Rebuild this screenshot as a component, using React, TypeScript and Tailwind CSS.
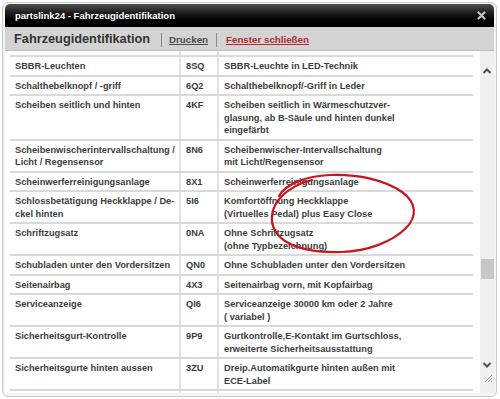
import React from "react";

type Row = { a: string[]; code: string; c: string[] };

const rows: Row[] = [
  { a: ["SBBR-Leuchten"], code: "8SQ", c: ["SBBR-Leuchte in LED-Technik"] },
  { a: ["Schalthebelknopf / -griff"], code: "6Q2", c: ["Schalthebelknopf/-Griff in Leder"] },
  {
    a: ["Scheiben seitlich und hinten"],
    code: "4KF",
    c: ["Scheiben seitlich in Wärmeschutzver-", "glasung, ab B-Säule und hinten dunkel", "eingefärbt"],
  },
  {
    a: ["Scheibenwischerintervallschaltung /", "Licht / Regensensor"],
    code: "8N6",
    c: ["Scheibenwischer-Intervallschaltung", "mit Licht/Regensensor"],
  },
  { a: ["Scheinwerferreinigungsanlage"], code: "8X1", c: ["Scheinwerferreinigungsanlage"] },
  {
    a: ["Schlossbetätigung Heckklappe / De-", "ckel hinten"],
    code: "5I6",
    c: ["Komfortöffnung Heckklappe", "(Virtuelles Pedal) plus Easy Close"],
  },
  { a: ["Schriftzugsatz"], code: "0NA", c: ["Ohne Schriftzugsatz", "(ohne Typbezeichnung)"] },
  { a: ["Schubladen unter den Vordersitzen"], code: "QN0", c: ["Ohne Schubladen unter den Vordersitzen"] },
  { a: ["Seitenairbag"], code: "4X3", c: ["Seitenairbag vorn, mit Kopfairbag"] },
  { a: ["Serviceanzeige"], code: "QI6", c: ["Serviceanzeige 30000 km oder 2 Jahre", "( variabel )"] },
  {
    a: ["Sicherheitsgurt-Kontrolle"],
    code: "9P9",
    c: ["Gurtkontrolle,E-Kontakt im Gurtschloss,", "erweiterte Sicherheitsausstattung"],
  },
  {
    a: ["Sicherheitsgurte hinten aussen"],
    code: "3ZU",
    c: ["Dreip.Automatikgurte hinten außen mit", "ECE-Label"],
  },
  { a: [""], code: "", c: [""] },
];

function Lines({ l }: { l: string[] }) {
  return (
    <>
      {l.map((t, i) => (
        <div key={i} className="whitespace-nowrap">
          {t || "\u00a0"}
        </div>
      ))}
    </>
  );
}

export default function App() {
  return (
    <div className="relative w-[500px] h-[399px] bg-white overflow-hidden font-['Liberation_Sans',Arial,sans-serif]">
      <div className="mt-[2px] ml-[2px] w-[495px] h-[395px] border border-[#c9c9c9] rounded-[6px] pl-[2px] pt-[1px] pr-[2px] pb-[3px] bg-[#f4f4f4]">
        <div className="flex flex-col h-full">
          {/* title bar */}
          <div className="h-[23px] flex items-center justify-between rounded-t-[5px] bg-linear-to-b from-[#505050] via-[#111] to-black pl-[10px] pr-[8px]">
            <span className="text-white font-bold text-[9.5px] leading-none">partslink24 - Fahrzeugidentifikation</span>
            <svg width="9" height="9" viewBox="0 0 9 9">
              <path d="M1.5 1.5 L7.5 7.5 M7.5 1.5 L1.5 7.5" stroke="#c4c4c4" strokeWidth="2.2" strokeLinecap="round" />
            </svg>
          </div>
          {/* header */}
          <div className="h-[24px] flex items-center bg-[#d3d3d3] pl-[9px] pt-[2px] border-b border-[#bdbdbd]">
            <span className="text-[12.75px] font-bold text-[#333] leading-none">Fahrzeugidentifikation</span>
            <span className="ml-[11px] w-px h-[14px] bg-[#8a8a8a]" />
            <span className="ml-[7px] text-[9.75px] font-bold text-[#4a4a4a] underline leading-none">Drucken</span>
            <span className="ml-[8px] w-px h-[14px] bg-[#8a8a8a]" />
            <span className="ml-[9px] text-[9.75px] font-bold text-[#b3282c] underline leading-none">Fenster schließen</span>
          </div>
          {/* content */}
          <div className="flex flex-1 min-h-0 bg-white">
            <div className="flex-1 overflow-hidden pl-[5px] pr-[7px]">
              <div className="text-[9.25px] leading-[12.5px] font-bold text-[#3d3d3d]">
                <div className="grid grid-cols-[171px_38px_1fr] h-[6px] border-b-2 border-[#d9d9d9]">
                  <div className="border-r-2 border-[#e3e3e3]" />
                  <div className="border-r-2 border-[#e3e3e3]" />
                  <div />
                </div>
                {rows.map((r, i) => (
                  <div key={i} className="grid grid-cols-[171px_38px_1fr] border-b-2 border-[#d9d9d9]">
                    <div className="border-r-2 border-[#e3e3e3] pl-[5px] pt-[3px] pb-[2px]">
                      <Lines l={r.a} />
                    </div>
                    <div className="border-r-2 border-[#e3e3e3] pl-[5px] pt-[3px] pb-[2px]">
                      <Lines l={[r.code]} />
                    </div>
                    <div className="pl-[5px] pt-[3px] pb-[2px]">
                      <Lines l={r.c} />
                    </div>
                  </div>
                ))}
              </div>
            </div>
            {/* scrollbar */}
            <div className="w-[14px] bg-[#efefef] flex flex-col items-center">
              <div className="h-[15px]" />
              <svg width="10" height="8" viewBox="0 0 10 8" className="mt-[1px]">
                <path d="M1.5 6 L5 2.5 L8.5 6" fill="none" stroke="#4f4f4f" strokeWidth="2" />
              </svg>
              <div className="h-[184px]" />
              <div className="w-[13px] h-[20px] bg-[#c7c7c7]" />
              <div className="h-[82px]" />
              <svg width="10" height="8" viewBox="0 0 10 8">
                <path d="M1.5 2 L5 5.5 L8.5 2" fill="none" stroke="#4f4f4f" strokeWidth="2" />
              </svg>
              <div className="h-[4px]" />
              <svg width="10" height="10" viewBox="0 0 10 10" className="self-end mr-[1px]">
                <path d="M9 2 L2 9 M9 5 L5 9 M9 8 L8 9" stroke="#9a9a9a" strokeWidth="1" />
              </svg>
            </div>
          </div>
        </div>
      </div>
      {/* red hand-drawn annotation */}
      <svg className="absolute left-0 top-0 pointer-events-none" width="500" height="399" viewBox="0 0 500 399">
        <path
          d="M279 196 C 286 184, 305 176, 330 175 C 358 174, 385 180, 402 192 C 416 202, 418 216, 406 228 C 392 242, 368 251, 342 252 C 315 253, 290 248, 279 236 C 268 224, 270 208, 282 196 C 290 188, 300 183, 312 180"
          fill="none"
          stroke="#c8161d"
          strokeWidth="2.2"
          strokeLinecap="round"
        />
      </svg>
    </div>
  );
}
